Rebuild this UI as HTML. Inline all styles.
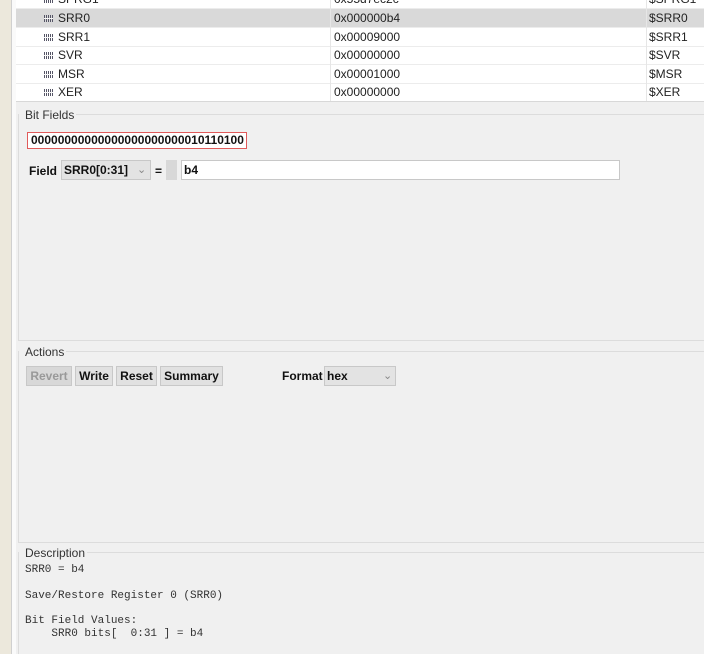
<!DOCTYPE html>
<html><head><style>
*{margin:0;padding:0;box-sizing:border-box}
html,body{width:704px;height:654px;overflow:hidden}
body{background:#f0f0f0;font-family:"Liberation Sans",sans-serif;position:relative}
.abs{position:absolute}
.beige{left:0;top:0;width:11px;height:654px;background:#ece8dc}
.sep{left:11px;top:0;width:1px;height:654px;background:#d0d0d0}
.sep2{left:12px;top:0;width:4px;height:654px;background:#fafafa}
.table{left:16px;top:0;width:688px;height:102px;background:#fff;border-bottom:1px solid #d8d8d8}
.row{position:absolute;left:0;width:688px;height:19px;border-bottom:1px solid #ececec;font-size:12px;color:#222;line-height:18px}
.row.sel{background:#d9d9d9}
.row span{position:absolute;top:0}
.c1{left:42px}.c2{left:318px}.c3{left:633px}
.ic{position:absolute;left:28px;top:6px}
.vl1{left:314px;top:0;width:1px;height:101px;background:#e6e6e6}
.vl2{left:630px;top:0;width:1px;height:101px;background:#e6e6e6}
.grp{position:absolute;left:18px;width:700px;border:1px solid #dcdcdc;border-right:none}
.lbl{position:absolute;font-size:12px;color:#333;background:#f0f0f0;padding:0 2px 0 6px}
.b{font-weight:bold;font-size:12px;color:#111}
.btn{position:absolute;top:366px;height:20px;border:1px solid #c8c8c8;background:#e1e1e1;font-weight:bold;font-size:12px;line-height:18px;text-align:center;color:#111}
.mono{font-family:"Liberation Mono",monospace;font-size:11px;color:#333;position:absolute;left:25px;white-space:pre;line-height:13px}
.chev{position:absolute;top:0;color:#888;font-weight:normal;font-size:11px}
</style></head><body>
<div class="abs beige"></div><div class="abs sep"></div><div class="abs sep2"></div>
<div class="abs table">
<svg width="0" height="0" style="position:absolute"><defs><g id="i"><rect x="0" y="0" width="1" height="7" fill="#556"/><rect x="2" y="0" width="1" height="7" fill="#556"/><rect x="4" y="0" width="1" height="7" fill="#556"/><rect x="6" y="0" width="1" height="7" fill="#556"/><rect x="8" y="0" width="1" height="7" fill="#556"/><rect x="0" y="3" width="9" height="1" fill="#f8f8f8"/></g></defs></svg>
<div class="row" style="top:-10px"><svg class="ic" width="10" height="8"><use href="#i"/></svg><span class="c1">SPRG1</span><span class="c2">0x55d7ec2c</span><span class="c3">$SPRG1</span></div>
<div class="row sel" style="top:9px"><svg class="ic" width="10" height="8"><use href="#i"/></svg><span class="c1">SRR0</span><span class="c2">0x000000b4</span><span class="c3">$SRR0</span></div>
<div class="row" style="top:28px"><svg class="ic" width="10" height="8"><use href="#i"/></svg><span class="c1">SRR1</span><span class="c2">0x00009000</span><span class="c3">$SRR1</span></div>
<div class="row" style="top:46px"><svg class="ic" width="10" height="8"><use href="#i"/></svg><span class="c1">SVR</span><span class="c2">0x00000000</span><span class="c3">$SVR</span></div>
<div class="row" style="top:65px"><svg class="ic" width="10" height="8"><use href="#i"/></svg><span class="c1">MSR</span><span class="c2">0x00001000</span><span class="c3">$MSR</span></div>
<div class="row" style="top:83px;border-bottom:none"><svg class="ic" width="10" height="8"><use href="#i"/></svg><span class="c1">XER</span><span class="c2">0x00000000</span><span class="c3">$XER</span></div>
<div class="abs vl1"></div><div class="abs vl2"></div>
</div>

<div class="grp" style="top:114px;height:227px"></div>
<div class="lbl" style="left:19px;top:108px">Bit Fields</div>
<div class="abs b" style="left:27px;top:132px;width:220px;height:17px;border:1px solid #e05a5a;background:#fff;line-height:15px;padding-left:3px;font-size:12px">00000000000000000000000010110100</div>
<div class="abs b" style="left:29px;top:164px">Field</div>
<div class="abs b" style="left:61px;top:160px;width:90px;height:20px;border:1px solid #c8c8c8;background:#e3e3e3;line-height:18px;padding-left:2px">SRR0[0:31]<span class="chev" style="left:75px">&#8964;</span></div>
<div class="abs b" style="left:155px;top:164px">=</div>
<div class="abs" style="left:166px;top:160px;width:11px;height:20px;background:#d8d8d8"></div>
<div class="abs b" style="left:181px;top:160px;width:439px;height:20px;border:1px solid #c8c8c8;background:#fff;line-height:18px;padding-left:2px">b4</div>

<div class="grp" style="top:351px;height:192px"></div>
<div class="lbl" style="left:19px;top:345px">Actions</div>
<div class="btn" style="left:26px;width:46px;color:#999;background:#d8d8d8">Revert</div>
<div class="btn" style="left:75px;width:38px">Write</div>
<div class="btn" style="left:116px;width:41px">Reset</div>
<div class="btn" style="left:160px;width:63px">Summary</div>
<div class="abs b" style="left:282px;top:369px">Format</div>
<div class="abs b" style="left:324px;top:366px;width:72px;height:20px;border:1px solid #c8c8c8;background:#e3e3e3;line-height:18px;padding-left:2px">hex<span class="chev" style="left:58px">&#8964;</span></div>

<div class="grp" style="top:552px;height:102px;border-bottom:none"></div>
<div class="lbl" style="left:19px;top:546px">Description</div>
<div class="mono" style="top:564px">SRR0 = b4</div>
<div class="mono" style="top:590px">Save/Restore Register 0 (SRR0)</div>
<div class="mono" style="top:615px">Bit Field Values:
    SRR0 bits[  0:31 ] = b4</div>
</body></html>
